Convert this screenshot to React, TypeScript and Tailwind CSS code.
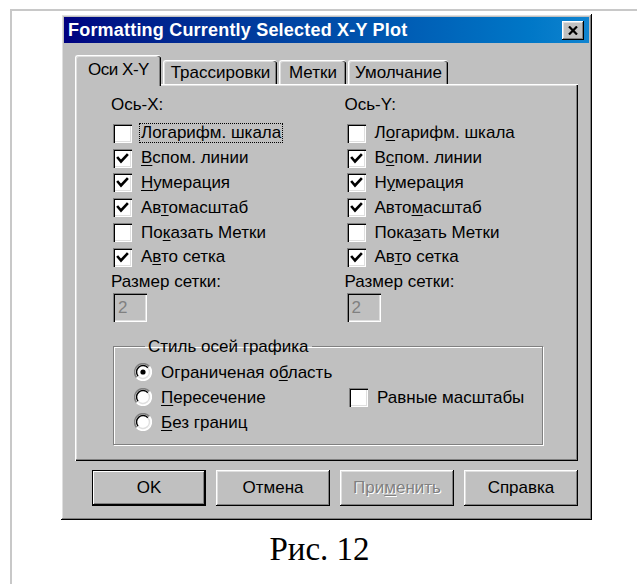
import { useState } from "react";

type Item = { label: string; checked: boolean; focus?: boolean };

const leftAxis: Item[] = [
  { label: "Логарифм. шкала", checked: false, focus: true },
  { label: "&Вспом. линии", checked: true },
  { label: "&Нумерация", checked: true },
  { label: "Ав&томасштаб", checked: true },
  { label: "По&казать Метки", checked: false },
  { label: "А&вто сетка", checked: true },
];

const rightAxis: Item[] = [
  { label: "Л&огарифм. шкала", checked: false },
  { label: "В&спом. линии", checked: true },
  { label: "Н&умерация", checked: true },
  { label: "Авто&масштаб", checked: true },
  { label: "Пока&зать Метки", checked: false },
  { label: "Ав&то сетка", checked: true },
];

const tabs = [
  { label: "Оси X-Y", w: "w-[86px]" },
  { label: "Трассировки", w: "w-[114px]" },
  { label: "Метки", w: "w-[67px]" },
  { label: "Умолчание", w: "w-[100px]" },
];

// "&" marks the access key letter, drawn underlined
function Mnemonic({ text }: { text: string }) {
  const i = text.indexOf("&");
  if (i < 0) return <>{text}</>;
  return (
    <>
      {text.slice(0, i)}
      <span className="underline underline-offset-2">{text[i + 1]}</span>
      {text.slice(i + 2)}
    </>
  );
}

const sunken =
  "shadow-[inset_1px_1px_#808080,inset_2px_2px_#000,inset_-1px_-1px_#fff,inset_-2px_-2px_#dfdfdf]";
const raised =
  "shadow-[inset_-1px_-1px_#000,inset_1px_1px_#fff,inset_-2px_-2px_#808080,inset_2px_2px_#dfdfdf]";

function CheckBox({ checked }: { checked: boolean }) {
  return (
    <span className={`flex h-[19px] w-[19px] shrink-0 items-center justify-center bg-white ${sunken}`}>
      {checked && (
        <svg width="13" height="13" viewBox="0 0 13 13">
          <path d="M2 6 L5 9.5 L11 3" fill="none" stroke="#000" strokeWidth="2.6" strokeLinecap="square" />
        </svg>
      )}
    </span>
  );
}

function Radio({ checked }: { checked: boolean }) {
  return (
    <svg width="18" height="18" viewBox="0 0 18 18" className="shrink-0">
      <circle cx="9" cy="9" r="8" fill="#fff" />
      <path d="M15.4 3.6 A8 8 0 0 0 2.6 14.4" fill="none" stroke="#808080" strokeWidth="1.6" />
      <path d="M13.9 4.8 A6.4 6.4 0 0 0 4.1 13.2" fill="none" stroke="#000" strokeWidth="1.4" />
      <path d="M2.6 14.4 A8 8 0 0 0 15.4 3.6" fill="none" stroke="#fff" strokeWidth="1.6" />
      <path d="M4.1 13.2 A6.4 6.4 0 0 0 13.9 4.8" fill="none" stroke="#dfdfdf" strokeWidth="1.4" />
      {checked && <circle cx="9" cy="9" r="2.6" fill="#000" />}
    </svg>
  );
}

function AxisColumn({ title, items, onToggle }: { title: string; items: Item[]; onToggle: (i: number) => void }) {
  return (
    <div className="flex w-[258px] flex-col">
      <div className="h-[19px] leading-[19px]">{title}</div>
      <div className="mt-[7px] flex flex-col">
        {items.map((it, i) => (
          <div key={i} className="flex h-[24.8px] items-center pl-[2px]" onClick={() => onToggle(i)}>
            <CheckBox checked={it.checked} />
            <span
              className={`ml-[8px] px-[1px] leading-[18px] ${it.focus ? "outline-1 outline-dotted outline-black" : ""}`}
            >
              <Mnemonic text={it.label} />
            </span>
          </div>
        ))}
      </div>
      <div className="mt-[2px] h-[19px] leading-[19px]">Размер сетки:</div>
      <div
        className={`mt-[2px] ml-[2px] flex h-[29px] w-[34px] items-center pl-[5px] text-[#808080] bg-[#c0c0c0] ${sunken}`}
      >
        2
      </div>
    </div>
  );
}

function Button({ children, primary, disabled }: { children: React.ReactNode; primary?: boolean; disabled?: boolean }) {
  return (
    <button
      type="button"
      className={`flex h-[36px] w-[114px] items-center justify-center bg-[#c0c0c0] ${
        primary
          ? "border border-black shadow-[inset_-1px_-1px_#000,inset_1px_1px_#fff,inset_-2px_-2px_#808080]"
          : raised
      } ${disabled ? "text-[#808080] [text-shadow:1px_1px_#fff]" : "text-black"}`}
    >
      {children}
    </button>
  );
}

export default function App() {
  const [xs, setXs] = useState(leftAxis);
  const [ys, setYs] = useState(rightAxis);
  const [style, setStyle] = useState(0);
  const [equal, setEqual] = useState(false);

  const toggle = (list: Item[], set: (v: Item[]) => void) => (i: number) =>
    set(list.map((it, j) => (j === i ? { ...it, checked: !it.checked } : it)));

  return (
    <div className="min-h-[584px] bg-white font-['Liberation_Sans',Arial,sans-serif] text-[17px] text-black">
      <div className="pt-[9px] pl-[10px]">
        <div className="min-h-[575px] border-t-2 border-l-2 border-[#c8c8c8] pt-[3px] pl-[49px]">
          {/* dialog window */}
          <div className={`flex h-[506px] w-[531px] flex-col bg-[#c0c0c0] p-[3px] ${raised}`}>
            <div className="flex h-[26px] items-center justify-between bg-gradient-to-r from-[#000080] to-[#1084d0] pr-[5px] pl-[4px]">
              <span className="text-[18px] font-bold tracking-[0.2px] text-white">
                Formatting Currently Selected X-Y Plot
              </span>
              <span className={`flex h-[19px] w-[22px] items-center justify-center bg-[#c0c0c0] ${raised}`}>
                <svg width="10" height="9" viewBox="0 0 10 9">
                  <path d="M1 0.5 L9 8.5 M9 0.5 L1 8.5" stroke="#000" strokeWidth="2.2" />
                </svg>
              </span>
            </div>

            <div className="flex flex-1 flex-col px-[11px]">
              {/* tab strip */}
              <div className="mt-[12px] flex h-[29px] items-start gap-[2px] pl-[1px]">
                {tabs.map((t, i) =>
                  i === 0 ? (
                    <div
                      key={t.label}
                      className={`relative z-10 -ml-[1px] flex h-[31px] items-center justify-center rounded-t-[3px] border-t border-l border-white bg-[#c0c0c0] shadow-[inset_-1px_0_#000,inset_-2px_0_#808080,inset_1px_1px_#dfdfdf] ${t.w}`}
                    >
                      <span className="mt-[-2px] tracking-[-0.5px]">{t.label}</span>
                    </div>
                  ) : (
                    <div
                      key={t.label}
                      className={`mt-[5px] flex h-[24px] items-center justify-center rounded-t-[3px] border-t border-l border-white shadow-[inset_-1px_0_#000,inset_-2px_0_#808080,inset_1px_1px_#dfdfdf] ${t.w}`}
                    >
                      {t.label}
                    </div>
                  )
                )}
              </div>

              {/* tab page */}
              <div className="flex h-[377px] flex-col border-t border-l border-white pt-[10px] pl-[35px] shadow-[inset_-1px_-1px_#000,inset_-2px_-2px_#808080,inset_1px_1px_#dfdfdf]">
                <div className="flex">
                  <AxisColumn title="Ось-X:" items={xs} onToggle={toggle(xs, setXs)} />
                  <AxisColumn title="Ось-Y:" items={ys} onToggle={toggle(ys, setYs)} />
                </div>

                <fieldset className="mt-[16px] ml-[2px] h-[107px] w-[430px] border border-[#808080] shadow-[1px_1px_#fff,inset_1px_1px_#fff] pl-[20px]">
                  <legend className="ml-[11px] mt-[6px] px-[3px] leading-[18px]">Стиль осей графика</legend>
                  <div className="flex">
                    <div className="flex w-[215px] flex-col pt-[4px]">
                      {["Ограниченая о&бласть", "&Пересечение", "&Без границ"].map((r, i) => (
                        <div key={r} className="flex h-[25px] items-center" onClick={() => setStyle(i)}>
                          <Radio checked={style === i} />
                          <span className="ml-[9px]">
                            <Mnemonic text={r} />
                          </span>
                        </div>
                      ))}
                    </div>
                    <div className="flex items-center pt-[4px]" onClick={() => setEqual(!equal)}>
                      <CheckBox checked={equal} />
                      <span className="ml-[9px]">Равные масштабы</span>
                    </div>
                  </div>
                </fieldset>
              </div>

              {/* dialog buttons */}
              <div className="mt-[9px] flex gap-[10px] pl-[17px]">
                <Button primary>OK</Button>
                <Button>Отмена</Button>
                <Button disabled>
                  <Mnemonic text="При&менить" />
                </Button>
                <Button>Справка</Button>
              </div>
            </div>
          </div>

          <div className="mt-[10px] -ml-[59px] text-center font-['Liberation_Serif','Times_New_Roman',serif] text-[33px] leading-[38px]">
            Рис. 12
          </div>
        </div>
      </div>
    </div>
  );
}
